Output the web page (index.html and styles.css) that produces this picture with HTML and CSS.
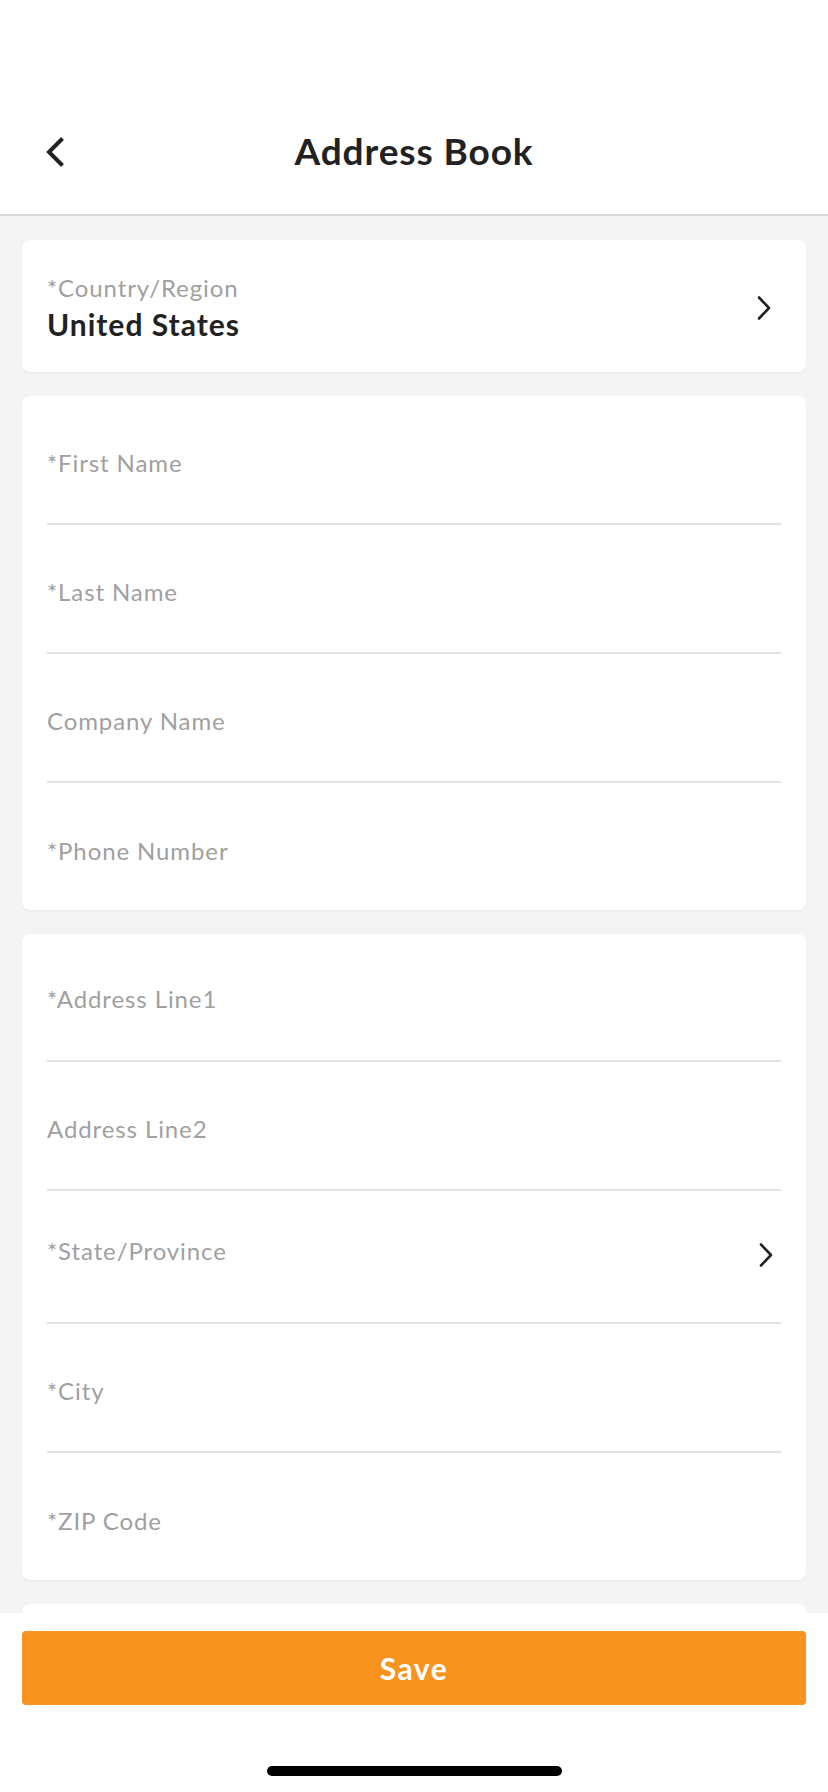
FILE: index.html
```html
<!DOCTYPE html>
<html lang="en">
<head>
<meta charset="utf-8">
<title>Address Book</title>
<link rel="stylesheet" href="styles.css">
</head>
<body>
<div class="screen">
  <div class="status-bar"></div>
  <header class="nav">
    <button class="back" aria-label="Back">
      <svg width="20" height="32" viewBox="0 0 20 32"><polyline points="17.5,2.5 4,16 17.5,29.5" fill="none" stroke="#222" stroke-width="4" stroke-linecap="butt" stroke-linejoin="miter"/></svg>
    </button>
    <h1 class="nav-title">Address Book</h1>
  </header>
  <main class="content">
    <section class="card card-select">
      <div class="select-text">
        <span class="label">*Country/Region</span>
        <span class="value">United States</span>
      </div>
      <svg class="chev" width="14" height="24" viewBox="0 0 14 24"><polyline points="2,1.5 12,12 2,22.5" fill="none" stroke="#222" stroke-width="2.6" stroke-linecap="round" stroke-linejoin="round"/></svg>
    </section>
    <section class="card">
      <div class="field"><span class="label">*First Name</span></div>
      <div class="field"><span class="label">*Last Name</span></div>
      <div class="field"><span class="label">Company Name</span></div>
      <div class="field field-last"><span class="label">*Phone Number</span></div>
    </section>
    <section class="card">
      <div class="field field-top"><span class="label">*Address Line1</span></div>
      <div class="field"><span class="label">Address Line2</span></div>
      <div class="field field-select">
        <span class="label">*State/Province</span>
        <svg class="chev chev-state" width="14" height="24" viewBox="0 0 14 24"><polyline points="2,1.5 12,12 2,22.5" fill="none" stroke="#222" stroke-width="2.6" stroke-linecap="round" stroke-linejoin="round"/></svg>
      </div>
      <div class="field"><span class="label">*City</span></div>
      <div class="field field-last"><span class="label">*ZIP Code</span></div>
    </section>
    <section class="card card-extra"></section>
  </main>
  <footer class="bottom-bar">
    <button class="save">Save</button>
    <div class="home-indicator"></div>
  </footer>
</div>
</body>
</html>
```
FILE: styles.css
```css
* { box-sizing: border-box; }
html, body {
  margin: 0;
  padding: 0;
  width: 828px;
  height: 1792px;
  overflow: hidden;
  background: #f4f4f4;
  font-family: "Lato", "Noto Sans", sans-serif;
}
.screen {
  width: 828px;
  height: 1792px;
  display: flex;
  flex-direction: column;
}
.status-bar {
  height: 88px;
  background: #fff;
  flex: none;
}
.nav {
  height: 128px;
  flex: none;
  background: #fff;
  border-bottom: 2px solid #d8d8d8;
  display: flex;
  align-items: center;
  justify-content: center;
  position: relative;
}
.back {
  position: absolute;
  left: 45px;
  top: 48px;
  width: 20px;
  height: 32px;
  padding: 0;
  border: 0;
  background: none;
  display: block;
}
.back svg { display: block; }
.nav-title {
  margin: 0;
  font-size: 37px;
  font-weight: 700;
  color: #222;
  line-height: 44px;
  letter-spacing: 0.9px;
}
.content {
  padding: 24px 22px 0;
  display: flex;
  flex-direction: column;
  gap: 24px;
}
.card {
  background: #fff;
  border-radius: 8px;
  padding: 0 25px;
  box-shadow: 0 1px 2px rgba(0,0,0,0.06);
}
.card-select {
  height: 132px;
  padding: 34px 35px 30px 25px;
  display: flex;
  align-items: center;
  justify-content: space-between;
}
.select-text {
  display: flex;
  flex-direction: column;
}
.select-text .label {
  line-height: 28px;
}
.value {
  margin-top: 3px;
  font-size: 30px;
  line-height: 38px;
  font-weight: 700;
  color: #222;
  letter-spacing: 1px;
}
.label {
  font-size: 24px;
  font-weight: 400;
  color: #a0a0a0;
  line-height: 28px;
  letter-spacing: 0.9px;
}
.chev { display: block; flex: none; }
.field {
  height: 129px;
  border-bottom: 2px solid #e2e2e2;
  padding-top: 7px;
  display: flex;
  align-items: center;
  justify-content: space-between;
}
.field-top {
  height: 128px;
  padding-top: 3px;
}
.field-last {
  height: 127px;
  border-bottom: 0;
  padding-top: 8px;
}
.field-select {
  height: 133px;
  padding-top: 0;
  padding-bottom: 11px;
}
.chev-state {
  margin-right: 8px;
  margin-top: 8px;
}
.card-extra {
  height: 200px;
}
.bottom-bar {
  position: fixed;
  left: 0;
  bottom: 0;
  width: 828px;
  height: 179px;
  background: #fff;
  padding: 18px 22px 0;
  display: flex;
  flex-direction: column;
  align-items: center;
}
.save {
  width: 784px;
  height: 74px;
  border: 0;
  border-radius: 4px;
  background: #f8931f;
  color: #fff;
  font-family: "Lato", "Noto Sans", sans-serif;
  font-size: 30px;
  font-weight: 700;
  letter-spacing: 1.5px;
  padding: 0;
}
.home-indicator {
  margin-top: 61px;
  width: 295px;
  height: 10px;
  border-radius: 5px;
  background: #000;
}
```
